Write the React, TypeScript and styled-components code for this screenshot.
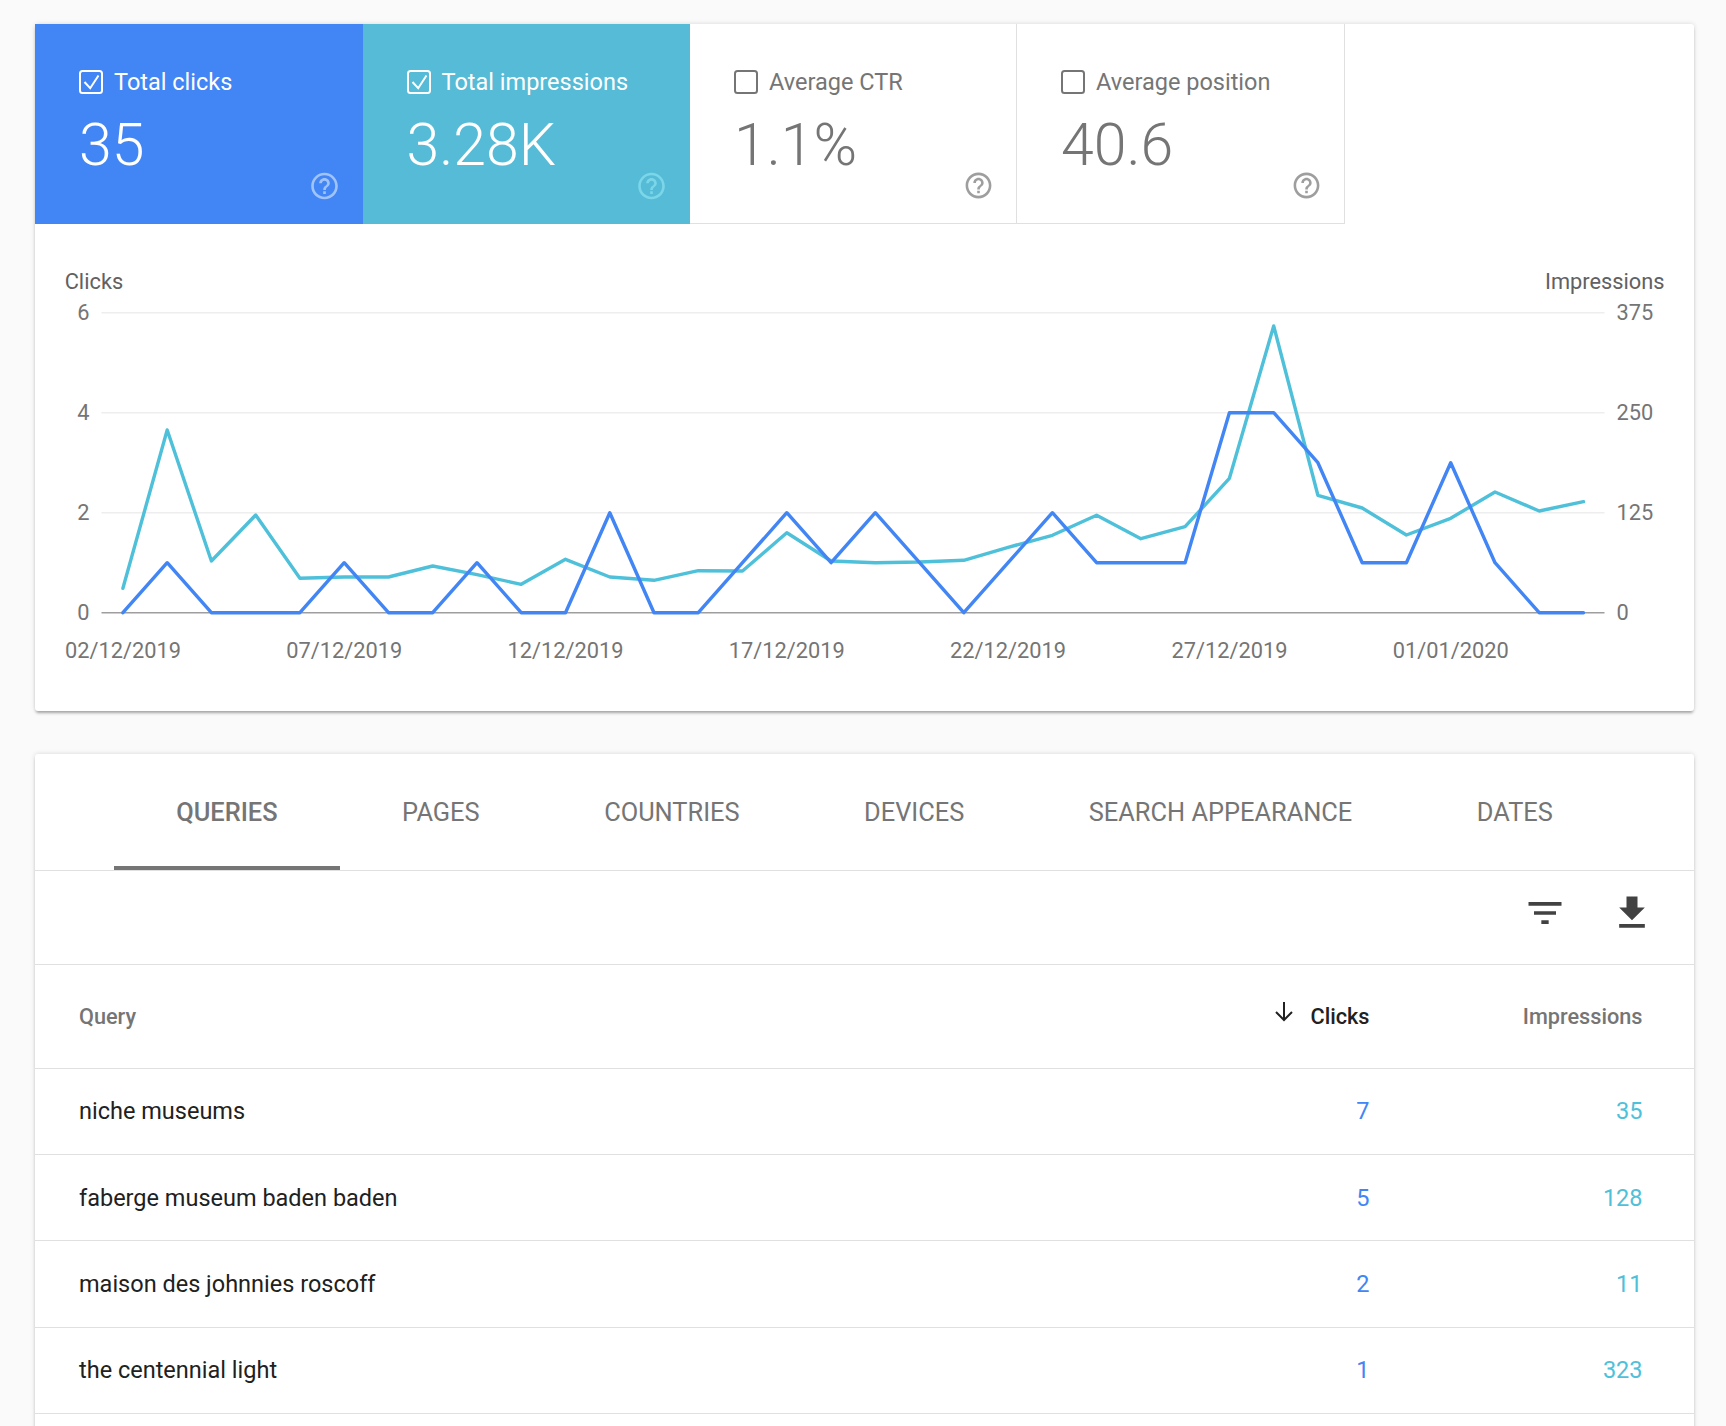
// App.tsx
import React from 'react';
import styled, { createGlobalStyle } from 'styled-components';

const GlobalStyle = createGlobalStyle`
	html, body {
		margin: 0;
		padding: 0;
		background: #fafafa;
		font-family: Roboto, "Liberation Sans", sans-serif;
	}
`;

const BLUE = '#4285f4';
const TEAL = '#4fc0d9';

const Page = styled.div`
	box-sizing: border-box;
	height: 100vh;
	overflow: hidden;
	padding: 24px 32px 0 35px;
`;

const Card = styled.section`
	background: #fff;
	border-radius: 3px;
	box-shadow: 0 3px 3px -1px rgba(0, 0, 0, 0.3), 0 0 5px rgba(0, 0, 0, 0.14);
`;

const TableCard = styled(Card)`
	margin-top: 43px;
	padding-bottom: 40px;
`;

const Tiles = styled.div`
	display: flex;
`;

type TileKind = 'blue' | 'teal' | 'plain';

const tileBackground: Record<TileKind, string> = {
	blue: BLUE,
	teal: '#55bbd6',
	plain: '#fff',
};

const helpColor: Record<TileKind, string> = {
	blue: '#a0c3fa',
	teal: '#7ad6e8',
	plain: '#9e9e9e',
};

const Tile = styled.div<{ $kind: TileKind }>`
	box-sizing: border-box;
	display: flex;
	flex-direction: column;
	width: 327.5px;
	height: 200px;
	padding: 46px 22px 22px 44px;
	background: ${(p) => tileBackground[p.$kind]};
	color: ${(p) => (p.$kind === 'plain' ? '#757575' : '#fff')};
	border-right: ${(p) => (p.$kind === 'plain' ? '1px solid #e0e0e0' : 'none')};
	border-bottom: ${(p) => (p.$kind === 'plain' ? '1px solid #e0e0e0' : 'none')};

	&:nth-child(3) {
		width: 327px;
		padding-right: 21px;
	}

	&:nth-child(4) {
		width: 328px;
		padding-right: 21px;
	}
`;

const TileHeader = styled.div`
	display: flex;
	align-items: center;
	gap: 11px;
	height: 24px;
	font-size: 23.5px;
`;

const TileValue = styled.div`
	margin-top: 26px;
	font-size: 59px;
	font-weight: 300;
	line-height: 50px;
`;

const HelpIcon = styled.svg<{ $kind: TileKind }>`
	display: block;
	align-self: flex-end;
	margin-top: auto;
	width: 33px;
	height: 33px;
	fill: ${(p) => helpColor[p.$kind]};
`;

const CheckIcon = styled.svg`
	flex: none;
	width: 24px;
	height: 24px;
	fill: none;
	stroke: currentColor;
	stroke-width: 2;
`;

const ChartSvg = styled.svg`
	display: block;
	width: 1659px;
	height: 487px;
`;

const GridLine = styled.line<{ $base?: boolean }>`
	stroke: ${(p) => (p.$base ? '#9e9e9e' : '#eeeeee')};
	stroke-width: 1.6;
`;

const AxisText = styled.text<{ $title?: boolean }>`
	font-family: Roboto, "Liberation Sans", sans-serif;
	font-size: 21.8px;
	fill: ${(p) => (p.$title ? '#616161' : '#757575')};
`;

const SeriesLine = styled.polyline`
	fill: none;
	stroke-width: 3.4;
	stroke-linejoin: round;
	stroke-linecap: round;
`;

const TabBar = styled.nav`
	display: flex;
	height: 116px;
	padding-left: 79px;
	border-bottom: 1px solid #e0e0e0;
`;

const Tab = styled.div<{ $active?: boolean }>`
	box-sizing: border-box;
	display: flex;
	align-items: center;
	height: 116px;
	padding: 4px 62.25px 0;
	font-size: 25.4px;
	font-weight: ${(p) => (p.$active ? 500 : 400)};
	color: #757575;
	border-bottom: 4px solid ${(p) => (p.$active ? '#757575' : 'transparent')};
`;

const Toolbar = styled.div`
	box-sizing: border-box;
	display: flex;
	justify-content: flex-end;
	gap: 43.5px;
	height: 94px;
	padding: 20px 40px 0 0;
	border-bottom: 1px solid #e0e0e0;
`;

const ToolIcon = styled.svg`
	display: block;
	width: 44px;
	height: 44px;
	fill: #424242;
`;

const Row = styled.div<{ $header?: boolean }>`
	box-sizing: border-box;
	display: grid;
	grid-template-columns: 1fr 200px 273px;
	align-items: center;
	height: ${(p) => (p.$header ? '103.5px' : '86.4px')};
	padding: 0 51.5px 0 44px;
	border-bottom: 1px solid #e0e0e0;
	font-size: ${(p) => (p.$header ? '21.7px' : '23.5px')};
`;

const HeadCell = styled.div<{ $right?: boolean; $sorted?: boolean }>`
	display: flex;
	align-items: center;
	justify-content: ${(p) => (p.$right ? 'flex-end' : 'flex-start')};
	gap: 16px;
	font-weight: 500;
	color: ${(p) => (p.$sorted ? '#212121' : '#757575')};
`;

const SortArrow = styled.svg`
	display: block;
	width: 20px;
	height: 21px;
	margin-top: -10px;
	fill: none;
	stroke: #212121;
	stroke-width: 2;
`;

const QueryCell = styled.div`
	color: #212121;
`;

const NumberCell = styled.div<{ $color: string }>`
	text-align: right;
	color: ${(p) => p.$color};
`;

const HELP_PATH =
	'M11 18h2v-2h-2v2zm1-16C6.48 2 2 6.48 2 12s4.48 10 10 10 10-4.48 10-10S17.52 2 12 2zm0 18c-4.41 0-8-3.59-8-8s3.59-8 8-8 8 3.59 8 8-3.59 8-8 8zm0-14c-2.21 0-4 1.79-4 4h2c0-1.1.9-2 2-2s2 .9 2 2c0 2-3 1.75-3 5h2c0-2.25 3-2.5 3-5 0-2.21-1.79-4-4-4z';

const tiles: { label: string; value: string; kind: TileKind; checked: boolean }[] = [
	{ label: 'Total clicks', value: '35', kind: 'blue', checked: true },
	{ label: 'Total impressions', value: '3.28K', kind: 'teal', checked: true },
	{ label: 'Average CTR', value: '1.1%', kind: 'plain', checked: false },
	{ label: 'Average position', value: '40.6', kind: 'plain', checked: false },
];

// chart geometry, relative to the top left of the chart area
const ORIGIN_X = 35;
const ORIGIN_Y = 224;
const PLOT_LEFT = 101.5 - ORIGIN_X;
const PLOT_RIGHT = 1604.5 - ORIGIN_X;
const FIRST_X = 122.9 - ORIGIN_X;
const STEP_X = 44.26;
const ZERO_Y = 612.7 - ORIGIN_Y;
const UNIT_Y = 50;

const clicks = [
	0, 1, 0, 0, 0, 1, 0, 0, 1, 0, 0, 2, 0, 0, 1, 2, 1, 2, 1, 0, 1, 2, 1, 1, 1, 4, 4, 3, 1, 1, 3, 1, 0, 0,
];

// read off the picture, page y of each day
const impressionsY = [
	588.3, 430, 561, 515, 578.3, 577, 577, 566, 574.7, 584.3, 559.3, 577, 580.3, 570.7, 571, 532.7, 561,
	562.7, 562, 560.3, 547.3, 535.3, 515.3, 538.7, 526.7, 478.3, 326, 495.3, 508, 535, 518.3, 492, 511,
	501.7,
];

const xOf = (i: number) => FIRST_X + STEP_X * i;

const clickPoints = clicks
	.map((c, i) => `${xOf(i).toFixed(1)},${(ZERO_Y - c * UNIT_Y).toFixed(1)}`)
	.join(' ');
const impressionPoints = impressionsY
	.map((y, i) => `${xOf(i).toFixed(1)},${(y - ORIGIN_Y).toFixed(1)}`)
	.join(' ');

const ticks = [
	{ left: '0', right: '0', level: 0 },
	{ left: '2', right: '125', level: 2 },
	{ left: '4', right: '250', level: 4 },
	{ left: '6', right: '375', level: 6 },
];

const dates = [
	{ label: '02/12/2019', index: 0 },
	{ label: '07/12/2019', index: 5 },
	{ label: '12/12/2019', index: 10 },
	{ label: '17/12/2019', index: 15 },
	{ label: '22/12/2019', index: 20 },
	{ label: '27/12/2019', index: 25 },
	{ label: '01/01/2020', index: 30 },
];

const tabs = ['QUERIES', 'PAGES', 'COUNTRIES', 'DEVICES', 'SEARCH APPEARANCE', 'DATES'];

const rows = [
	{ query: 'niche museums', clicks: 7, impressions: 35 },
	{ query: 'faberge museum baden baden', clicks: 5, impressions: 128 },
	{ query: 'maison des johnnies roscoff', clicks: 2, impressions: 11 },
	{ query: 'the centennial light', clicks: 1, impressions: 323 },
];

const Chart: React.FC = () => (
	<ChartSvg viewBox="0 0 1659 487">
		<AxisText $title x={64.7 - ORIGIN_X} y={289 - ORIGIN_Y}>
			Clicks
		</AxisText>
		<AxisText $title x={1664.5 - ORIGIN_X} y={289 - ORIGIN_Y} textAnchor="end">
			Impressions
		</AxisText>
		{ticks.map((t) => {
			const y = ZERO_Y - t.level * UNIT_Y;
			return (
				<g key={t.level}>
					<GridLine $base={t.level === 0} x1={PLOT_LEFT} x2={PLOT_RIGHT} y1={y} y2={y} />
					<AxisText x={89.6 - ORIGIN_X} y={y + 7.5} textAnchor="end">
						{t.left}
					</AxisText>
					<AxisText x={1616.6 - ORIGIN_X} y={y + 7.5}>
						{t.right}
					</AxisText>
				</g>
			);
		})}
		{dates.map((d) => (
			<AxisText key={d.label} x={xOf(d.index)} y={658 - ORIGIN_Y} textAnchor="middle">
				{d.label}
			</AxisText>
		))}
		<SeriesLine points={impressionPoints} stroke={TEAL} />
		<SeriesLine points={clickPoints} stroke={BLUE} />
	</ChartSvg>
);

export default function App() {
	return (
		<Page>
			<GlobalStyle />
			<Card>
				<Tiles>
					{tiles.map((t) => (
						<Tile key={t.label} $kind={t.kind}>
							<TileHeader>
								<CheckIcon viewBox="0 0 24 24">
									<rect x="1" y="1" width="22" height="22" rx="2.5" />
									{t.checked && <polyline points="5.5,12 11.2,18.2 19.5,5.5" />}
								</CheckIcon>
								{t.label}
							</TileHeader>
							<TileValue>{t.value}</TileValue>
							<HelpIcon $kind={t.kind} viewBox="0 0 24 24">
								<path d={HELP_PATH} />
							</HelpIcon>
						</Tile>
					))}
				</Tiles>
				<Chart />
			</Card>
			<TableCard>
				<TabBar>
					{tabs.map((name, i) => (
						<Tab key={name} $active={i === 0}>
							{name}
						</Tab>
					))}
				</TabBar>
				<Toolbar>
					<ToolIcon viewBox="0 0 24 24">
						<path d="M10 18h4v-2h-4v2zM3 6v2h18V6H3zm3 7h12v-2H6v2z" />
					</ToolIcon>
					<ToolIcon viewBox="0 0 24 24">
						<path d="M19 9h-4V3H9v6H5l7 7 7-7zM5 18v2h14v-2H5z" />
					</ToolIcon>
				</Toolbar>
				<Row $header>
					<HeadCell>Query</HeadCell>
					<HeadCell $right $sorted>
						<SortArrow viewBox="0 0 20 21">
							<path d="M10 1v18M2 11l8 8 8-8" />
						</SortArrow>
						Clicks
					</HeadCell>
					<HeadCell $right>Impressions</HeadCell>
				</Row>
				{rows.map((r) => (
					<Row key={r.query}>
						<QueryCell>{r.query}</QueryCell>
						<NumberCell $color={BLUE}>{r.clicks}</NumberCell>
						<NumberCell $color={TEAL}>{r.impressions}</NumberCell>
					</Row>
				))}
			</TableCard>
		</Page>
	);
}
